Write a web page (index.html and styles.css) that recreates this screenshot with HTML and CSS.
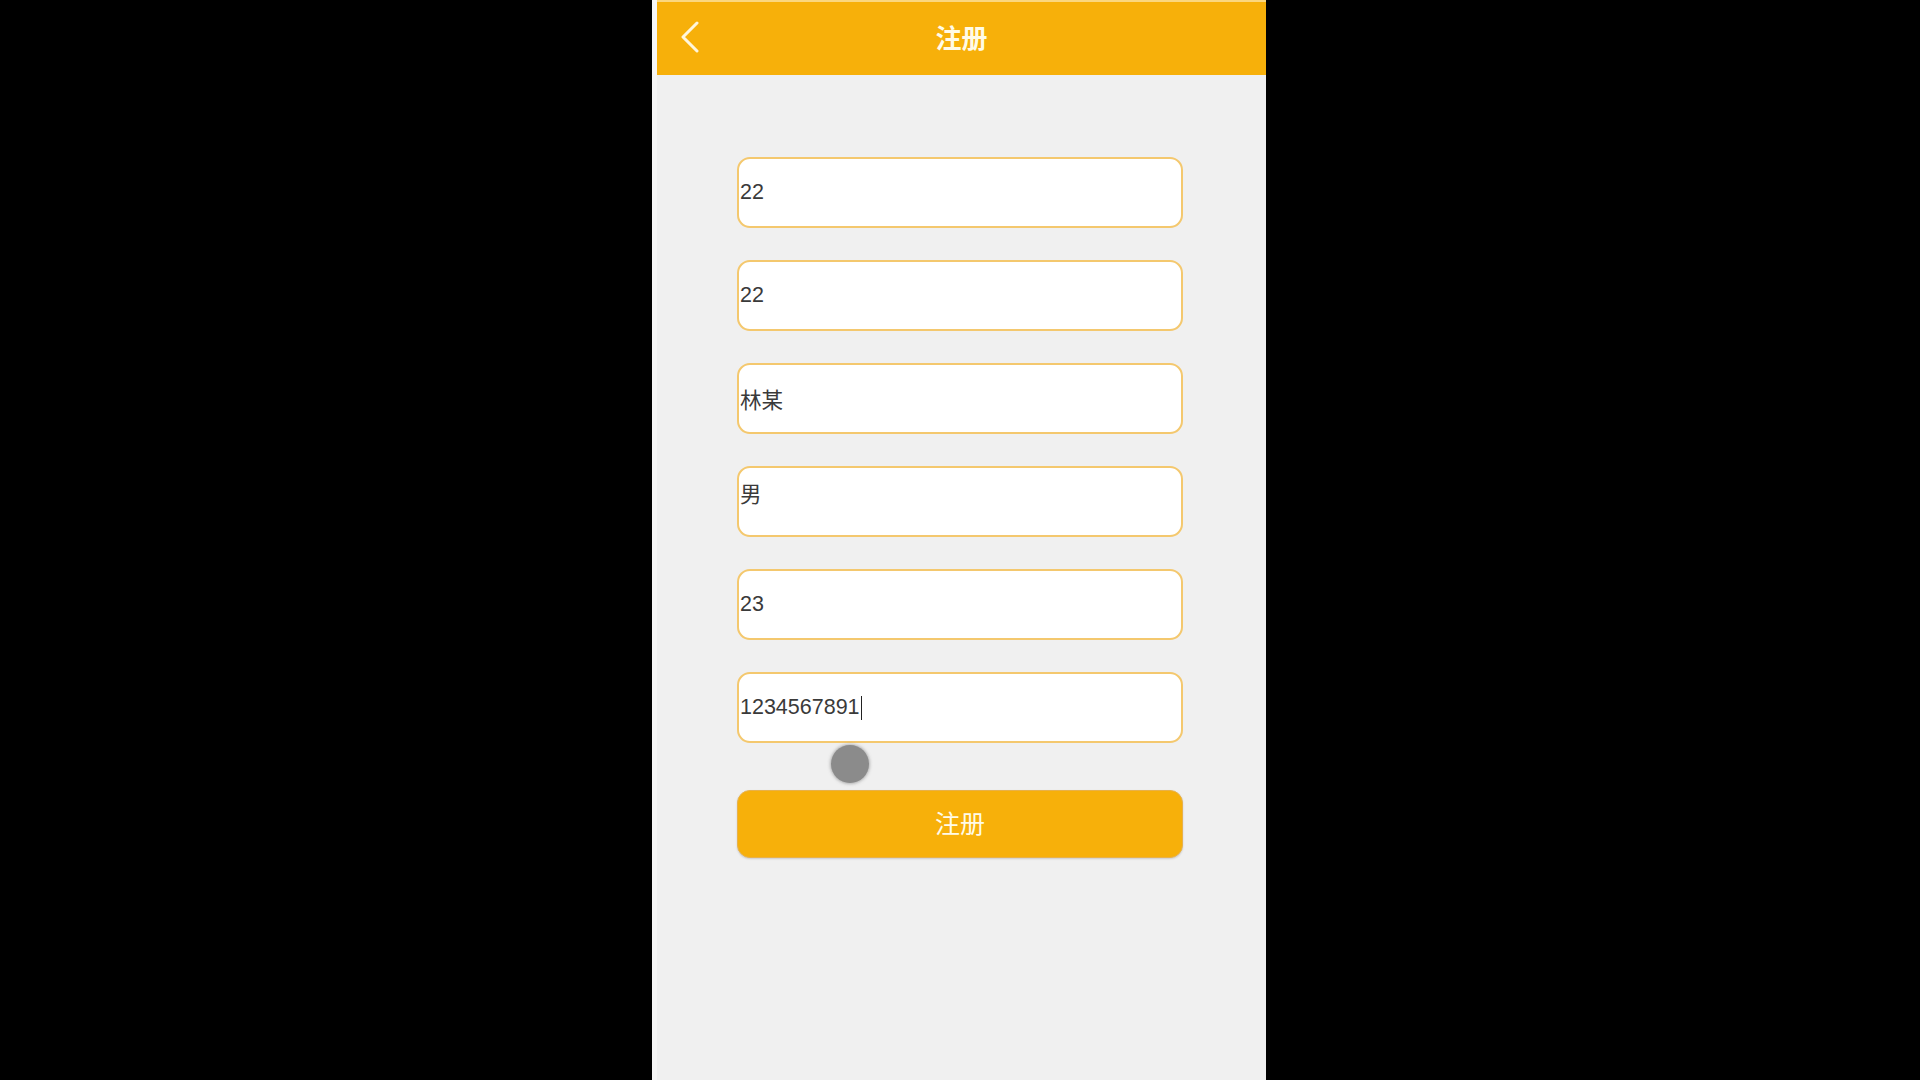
FILE: index.html
```html
<!DOCTYPE html>
<html lang="zh-CN">
<head>
<meta charset="utf-8">
<title>注册</title>
<link rel="stylesheet" href="styles.css">
</head>
<body>
<div class="phone">
  <header class="topbar">
    <svg class="back" width="20" height="32" viewBox="0 0 20 32"><polyline points="17,2 3,16 17,30" fill="none" stroke="#fff6dc" stroke-width="3" stroke-linecap="round" stroke-linejoin="round"/></svg>
    <h1 class="title">注册</h1>
  </header>
  <main class="form">
    <div class="field"><span class="val">22</span></div>
    <div class="field"><span class="val">22</span></div>
    <div class="field"><span class="val">林某</span></div>
    <div class="field field-high"><span class="val">男</span></div>
    <div class="field"><span class="val">23</span></div>
    <div class="field"><span class="val">1234567891</span><span class="caret"></span></div>
    <div class="touch"></div>
    <button class="submit">注册</button>
  </main>
</div>
</body>
</html>
```

FILE: styles.css
```css
html, body {
  margin: 0;
  padding: 0;
  background: #000;
  height: 1080px;
  overflow: hidden;
}
body {
  display: flex;
  font-family: "Liberation Sans", "Noto Sans CJK SC", sans-serif;
}
.phone {
  margin-left: 652px;
  width: 614px;
  height: 1080px;
  background: #f0f0f0;
  border-left: 5px solid #f6f6f6;
  box-sizing: border-box;
  position: relative;
}
.topbar {
  height: 75px;
  background: #f7b00a;
  border-top: 2px solid #fbd77f;
  box-sizing: border-box;
  display: flex;
  align-items: center;
  justify-content: center;
  padding-bottom: 5px;
  position: relative;
}
.back {
  position: absolute;
  left: 23px;
  top: 19px;
}
.title {
  margin: 0;
  font-size: 26px;
  font-weight: bold;
  color: #fffbe8;
  letter-spacing: 0;
}
.form {
  padding: 82px 0 0 80px;
  display: flex;
  flex-direction: column;
  gap: 32px;
  position: relative;
}
.field {
  width: 446px;
  height: 71px;
  box-sizing: border-box;
  background: #fff;
  border: 2px solid #f4c86e;
  border-radius: 13px;
  display: flex;
  align-items: center;
  padding-left: 1px;
  font-size: 21.5px;
  color: #3a3a3a;
}
.field-high .val {
  margin-bottom: 18px;
}
.caret {
  display: inline-block;
  width: 1.5px;
  height: 24px;
  background: #222;
  margin-left: 1px;
}
.touch {
  position: absolute;
  left: 174px;
  top: 670px;
  width: 38px;
  height: 38px;
  border-radius: 50%;
  background: #8b8b8b;
  box-shadow: 0 0 3px 1px rgba(120,120,120,0.5);
}
.submit {
  margin-top: 15px;
  width: 446px;
  height: 68px;
  border: 1px solid #e8b14a;
  border-radius: 13px;
  background: #f7b00a;
  color: #fffbe8;
  font-family: "Liberation Sans", "Noto Sans CJK SC", sans-serif;
  font-size: 25px;
  box-shadow: 0 1px 2px rgba(0,0,0,0.15);
  padding: 0 0 5px 0;
}
```
